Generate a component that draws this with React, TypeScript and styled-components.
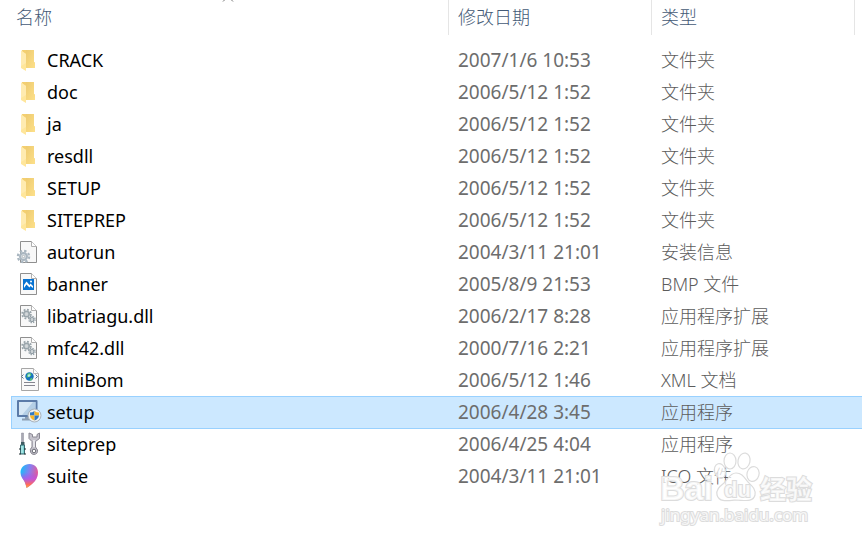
import React from "react";
import styled, { createGlobalStyle } from "styled-components";

const GlobalStyle = createGlobalStyle`
  body {
    margin: 0;
    background: #ffffff;
    overflow: hidden;
    font-family: "Noto Sans", "Noto Sans CJK SC", sans-serif;
  }
`;

const Explorer = styled.main`
  position: relative;
  padding: 0 0 52px 11px;
`;

const FileTable = styled.table`
  width: 100%;
  table-layout: fixed;
  border-collapse: separate;
  border-spacing: 0;
`;

const NameCol = styled.col``;

const DateCol = styled.col`
  width: 203px;
`;

const TypeCol = styled.col`
  width: 211px;
`;

const HeadCell = styled.th`
  position: relative;
  height: 35px;
  padding: 0 0 9px;
  text-align: left;
  font-weight: 400;
`;

const HeadButton = styled.button<{ $divided?: boolean; $last?: boolean }>`
  display: block;
  width: ${(p) => (p.$last ? "204px" : "100%")};
  height: 35px;
  margin: 0;
  padding: 0 0 4px ${(p) => (p.$divided ? 9 : 5)}px;
  border: 0 solid #e5e5e5;
  border-left-width: ${(p) => (p.$divided ? 1 : 0)}px;
  border-right-width: ${(p) => (p.$last ? 1 : 0)}px;
  background: transparent;
  color: #445a76;
  font-family: "Noto Sans CJK SC", sans-serif;
  font-weight: 300;
  font-size: 18px;
  line-height: 30px;
  text-align: left;
`;

const SortMark = styled.svg`
  position: absolute;
  top: -4px;
  left: 50%;
  width: 12px;
  height: 6px;
  margin-left: -8px;
`;

const Row = styled.tr<{ $selected?: boolean }>`
  background: ${(p) => (p.$selected ? "#cce8ff" : "transparent")};
  box-shadow: ${(p) =>
    p.$selected ? "inset 1px 1px #99d1ff, 0 1px #99d1ff" : "none"};
`;

const Cell = styled.td`
  height: 32px;
  padding: 0 0 0 10px;
  color: #6d6d6d;
  font-size: 18px;
  line-height: 32px;
  white-space: nowrap;
`;

const TypeCell = styled(Cell)`
  color: #5c5c5c;
  font-weight: 300;
`;

const DateCell = styled(Cell)`
  font-size: 19px;
`;

const NameCell = styled(Cell)`
  padding-left: 6px;
  color: #000000;
`;

const FileName = styled.div`
  display: flex;
  align-items: center;
  gap: 6px;
  height: 32px;
`;

const Icon = styled.svg`
  flex: none;
  width: 24px;
  height: 24px;
  overflow: visible;
`;

const Watermark = styled.svg`
  position: absolute;
  right: 42px;
  bottom: 16px;
  width: 160px;
  height: 84px;
  overflow: visible;
  pointer-events: none;
`;

type Kind =
  | "folder"
  | "config"
  | "image"
  | "library"
  | "xml"
  | "installer"
  | "tools"
  | "pin";

const Page = () => (
  <>
    <path d="M3.5 1.5h11l5 5v16h-16z" fill="#f8f8f8" stroke="#8f8f8f" />
    <path d="M14.5 1.5v5h5" fill="#ffffff" stroke="#b0b0b0" />
  </>
);

const Gear = ({ x, y, r, tone }: { x: number; y: number; r: number; tone: string }) => (
  <g transform={`translate(${x} ${y})`}>
    <circle r={r} fill="none" stroke={tone} strokeWidth={r * 0.4} strokeDasharray={`${r * 0.42} ${r * 0.365}`} />
    <circle r={r * 0.6} fill="#f4f7f8" stroke={tone} strokeWidth={r * 0.4} />
    <circle r={r * 0.22} fill="#ffffff" stroke="#8b959c" strokeWidth={r * 0.12} />
  </g>
);

const pinShape =
  "M12.5 0C7 0 3.5 4 3.5 8.500c0 4 2.500 6.500 4 9 1 2 1.500 4 2 6.500C16 20 21 15 21 8.500 21 4 18 0 12.500 0";

const drawings: Record<Kind, React.ReactNode> = {
  folder: (
    <>
      <path d="M5 2h12v12.500h1V20H7z" fill="#f4cf70" />
      <path d="M9 2h8v12.500h1V20H9z" fill="url(#folderBack)" />
      <path d="M4 2.500 9 6v17l-5-3z" fill="#ffe69b" />
      <path d="M4 2.500 9 6v9l-5 3z" fill="#ffebb0" />
    </>
  ),
  config: (
    <>
      <Page />
      <Gear x={6.5} y={16.5} r={5.6} tone="#a9b6c0" />
    </>
  ),
  image: (
    <>
      <Page />
      <path d="M6 7h11v11H6z" fill="#0873d2" />
      <path d="M7 16v-3l2.500-3.500 3 3.500 1-1.500 2.500 2.500v2l-2.500-2-1 1.500-3-3z" fill="#ffffff" />
      <circle cx="14" cy="9.500" r="1" fill="#ffffff" />
    </>
  ),
  library: (
    <>
      <Page />
      <Gear x={9.5} y={10} r={4.4} tone="#9aa5ab" />
      <Gear x={15} y={15.5} r={3.2} tone="#929ea5" />
    </>
  ),
  xml: (
    <>
      <path d="M4.500.500h12l5 5v17h-17z" fill="#f9f9f9" stroke="#a6a6a6" />
      <path d="M16.500.500v5h5" fill="#ffffff" stroke="#b8b8b8" />
      <circle cx="12.500" cy="8.500" r="4.200" fill="#1673be" />
      <path d="M10.500 5.500 13.500 5l1 2-2 2-3 .500zM13.500 10.500l2-1-1 3h-2z" fill="#5bc96b" />
      <path d="m10.500 7 2-1 1 2-2 1z" fill="#b9e9f5" />
      <path d="m6.500 6.500-2 2 2 2M18.500 6.500l2 2-2 2" fill="none" stroke="#5c748c" />
      <path d="M7 14.500h11M7 17.500h11" stroke="#85858f" />
    </>
  ),
  installer: (
    <>
      <path d="M1 1h18.500v15H1z" fill="#bcd9ef" stroke="#5b7ba8" strokeWidth="2" strokeLinejoin="round" />
      <path d="M2 2h16.500v13H2z" fill="#b4cfe6" />
      <path d="M2 2h14L5 15H2z" fill="#d6e7f5" />
      <path d="M8 17h5v2H8zM5 18.500h10v2H5z" fill="#8b9eb2" />
      <circle cx="17.500" cy="15.500" r="6.500" fill="#edf0f2" stroke="#a8b2bb" />
      <path d="M17.500 11v4.500H13v-3q2.500 0 4.500-1.500" fill="#2f78c4" />
      <path d="M17.500 11q2 1.500 4.500 1.500v3h-4.500" fill="#f7b628" />
      <path d="M13 15.500h4.500v5Q13.500 19 13 15.500" fill="#f7b628" />
      <path d="M17.500 15.500H22q-.500 3.500-4.500 5" fill="#2f78c4" />
    </>
  ),
  tools: (
    <>
      <path d="M4.500 1h2v9h-2z" fill="#a9a9b4" stroke="#8d8d98" strokeWidth=".500" />
      <path d="M4 10h3.500v3H4z" fill="#3f5c62" />
      <path d="M3.500 13h4v9h-4z" fill="#7ed2d2" stroke="#3c6a70" />
      <path d="M5 14v7" stroke="#c8f6f4" />
      <path d="M3 16v2M8 16v2M3 21v2M8 21v2" stroke="#1f2c30" />
      <path d="M12 1v5.500l3 3v5.500q-2.500 2-1.500 5 1 2.500 3.500 2.500 4-.500 3.500-4.500l-2-3V9.500l4-3V1L20 2.500V5h-4.500V2.500z" fill="#c4c2cb" stroke="#8a8893" />
      <path d="M17 8v7" stroke="#efeff3" strokeWidth="1.500" />
      <circle cx="17" cy="19" r="1.800" fill="#ffffff" stroke="#686a72" />
    </>
  ),
  pin: (
    <>
      <path d={pinShape} fill="url(#pinHue)" />
      <path d={pinShape} fill="url(#pinWarm)" />
    </>
  ),
};

const files: { name: string; date: string; type: string; kind: Kind; selected?: boolean }[] = [
  { name: "CRACK", date: "2007/1/6 10:53", type: "文件夹", kind: "folder" },
  { name: "doc", date: "2006/5/12 1:52", type: "文件夹", kind: "folder" },
  { name: "ja", date: "2006/5/12 1:52", type: "文件夹", kind: "folder" },
  { name: "resdll", date: "2006/5/12 1:52", type: "文件夹", kind: "folder" },
  { name: "SETUP", date: "2006/5/12 1:52", type: "文件夹", kind: "folder" },
  { name: "SITEPREP", date: "2006/5/12 1:52", type: "文件夹", kind: "folder" },
  { name: "autorun", date: "2004/3/11 21:01", type: "安装信息", kind: "config" },
  { name: "banner", date: "2005/8/9 21:53", type: "BMP 文件", kind: "image" },
  { name: "libatriagu.dll", date: "2006/2/17 8:28", type: "应用程序扩展", kind: "library" },
  { name: "mfc42.dll", date: "2000/7/16 2:21", type: "应用程序扩展", kind: "library" },
  { name: "miniBom", date: "2006/5/12 1:46", type: "XML 文档", kind: "xml" },
  { name: "setup", date: "2006/4/28 3:45", type: "应用程序", kind: "installer", selected: true },
  { name: "siteprep", date: "2006/4/25 4:04", type: "应用程序", kind: "tools" },
  { name: "suite", date: "2004/3/11 21:01", type: "ICO 文件", kind: "pin" },
];

const Gradients = () => (
  <defs>
    <linearGradient id="folderBack" x1="0" y1="0" x2="1" y2="1">
      <stop offset="0" stopColor="#eecb70" />
      <stop offset="1" stopColor="#fde08a" />
    </linearGradient>
    <linearGradient id="pinHue" x1="0" y1="0.2" x2="1" y2="0.5">
      <stop offset="0" stopColor="#12c0fa" />
      <stop offset="0.5" stopColor="#8a7cf0" />
      <stop offset="1" stopColor="#f0568c" />
    </linearGradient>
    <linearGradient id="pinWarm" x1="0.4" y1="0" x2="0.4" y2="1">
      <stop offset="0.35" stopColor="#a24cf0" stopOpacity="0" />
      <stop offset="0.62" stopColor="#c250e0" stopOpacity="0.75" />
      <stop offset="0.85" stopColor="#ff6a5c" />
      <stop offset="1" stopColor="#ffb03a" />
    </linearGradient>
  </defs>
);

const BaiduMark = () => (
  <Watermark viewBox="0 0 160 84" aria-label="Baidu 经验">
    <g fill="#ffffff" fillOpacity=".75" stroke="#dcdcdc" strokeWidth="1.200">
      <ellipse cx="60" cy="27" rx="5.500" ry="7.500" transform="rotate(-15 60 27)" />
      <ellipse cx="70" cy="17" rx="6" ry="8" />
      <ellipse cx="84" cy="17" rx="6" ry="8" transform="rotate(12 84 17)" />
      <ellipse cx="93" cy="30" rx="6" ry="7.500" transform="rotate(15 93 30)" />
      <path d="M76 29c-6 0-8 6-12 10-5 4-8 7-7 12 2 7 9 6 18 5 9 0 18 3 20-5 1-6-3-9-7-13-4-5-6-9-12-9z" />
      <g fontFamily="Liberation Sans, sans-serif" fontWeight="700" paintOrder="stroke" strokeWidth="2">
        <text x="0" y="56" fontSize="34">Bai</text>
        <text x="64" y="53" fontSize="22">du</text>
        <text x="100" y="55" fontSize="26" fontFamily="Noto Sans CJK SC, sans-serif">经验</text>
        <text x="1" y="77" fontSize="17" fontWeight="400" fontFamily="Noto Sans, sans-serif">jingyan.baidu.com</text>
      </g>
    </g>
  </Watermark>
);

export default function App() {
  return (
    <Explorer>
      <GlobalStyle />
      <FileTable>
        <colgroup>
          <NameCol />
          <DateCol />
          <TypeCol />
        </colgroup>
        <thead>
          <tr>
            <HeadCell scope="col" aria-sort="ascending">
              <HeadButton>名称</HeadButton>
              <SortMark viewBox="0 0 12 6" aria-hidden="true">
                <path d="M1 5.500 6 .5l5 5" fill="none" stroke="#777777" strokeWidth="1" />
              </SortMark>
            </HeadCell>
            <HeadCell scope="col">
              <HeadButton $divided>修改日期</HeadButton>
            </HeadCell>
            <HeadCell scope="col">
              <HeadButton $divided $last>类型</HeadButton>
            </HeadCell>
          </tr>
        </thead>
        <tbody>
          {files.map((file, i) => (
            <Row key={file.name} $selected={file.selected} aria-selected={!!file.selected}>
              <NameCell>
                <FileName>
                  <Icon viewBox="0 0 24 24" aria-hidden="true">
                    {i === 0 && <Gradients />}
                    {drawings[file.kind]}
                  </Icon>
                  {file.name}
                </FileName>
              </NameCell>
              <DateCell>{file.date}</DateCell>
              <TypeCell>{file.type}</TypeCell>
            </Row>
          ))}
        </tbody>
      </FileTable>
      <BaiduMark />
    </Explorer>
  );
}
